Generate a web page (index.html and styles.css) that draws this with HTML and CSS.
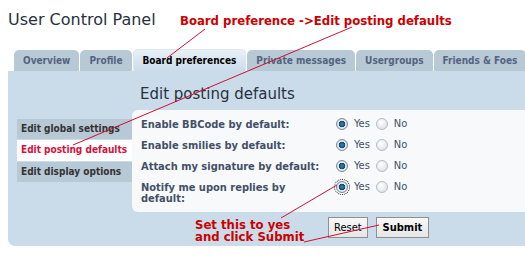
FILE: index.html
```html
<!DOCTYPE html>
<html>
<head>
<meta charset="utf-8">
<link rel="stylesheet" href="styles.css">
</head>
<body>
<div class="page">
  <h1 class="title">User Control Panel</h1>
  <ul class="tabs">
    <li class="tab">Overview</li>
    <li class="tab">Profile</li>
    <li class="tab active">Board preferences</li>
    <li class="tab">Private messages</li>
    <li class="tab">Usergroups</li>
    <li class="tab">Friends &amp; Foes</li>
  </ul>
  <div class="panel">
    <ul class="menu">
      <li class="menu-item">Edit global settings</li>
      <li class="menu-item current">Edit posting defaults</li>
      <li class="menu-item">Edit display options</li>
    </ul>
    <div class="main">
      <h2 class="heading">Edit posting defaults</h2>
      <div class="box">
        <div class="row">
          <div class="label">Enable BBCode by default:</div>
          <div class="opts"><input type="radio" name="a" checked><span class="opt">Yes</span><input type="radio" name="a"><span class="opt">No</span></div>
        </div>
        <div class="row">
          <div class="label">Enable smilies by default:</div>
          <div class="opts"><input type="radio" name="b" checked><span class="opt">Yes</span><input type="radio" name="b"><span class="opt">No</span></div>
        </div>
        <div class="row">
          <div class="label">Attach my signature by default:</div>
          <div class="opts"><input type="radio" name="c" checked><span class="opt">Yes</span><input type="radio" name="c"><span class="opt">No</span></div>
        </div>
        <div class="row">
          <div class="label">Notify me upon replies by default:</div>
          <div class="opts"><input type="radio" name="d" class="focused" checked><span class="opt">Yes</span><input type="radio" name="d"><span class="opt">No</span></div>
        </div>
      </div>
      <div class="buttons">
        <button class="btn">Reset</button>
        <button class="btn strong">Submit</button>
      </div>
    </div>
  </div>

  <div class="note note-top">Board preference -&gt;Edit posting defaults</div>
  <div class="note note-bottom">Set this to yes<br>and click Submit</div>
  <svg class="arrows" width="525" height="263" viewBox="0 0 525 263">
    <g stroke="#d0102e" stroke-width="1" fill="none">
      <line x1="205" y1="29" x2="167" y2="58"/>
      <line x1="352" y1="27" x2="73" y2="145"/>
      <line x1="337" y1="185" x2="281" y2="218"/>
      <line x1="379" y1="225" x2="304" y2="242"/>
    </g>
  </svg>
</div>
</body>
</html>
```
FILE: styles.css
```css
* { box-sizing: border-box; }
html, body { margin: 0; padding: 0; background: #fff; }
body { width: 525px; height: 263px; overflow: hidden; font-family: "DejaVu Sans Condensed", "DejaVu Sans", sans-serif; }
.page { position: relative; width: 525px; height: 263px; padding-top: 9px; overflow: hidden; }

.title {
  margin: 0 0 0 8px;
  font-family: "DejaVu Sans", sans-serif;
  font-weight: normal;
  font-size: 16px;
  line-height: 22px;
  color: #28313f;
  height: 22px;
}

.tabs {
  list-style: none;
  margin: 19px 0 0 14px;
  padding: 0;
  display: flex;
  gap: 1px;
  height: 21px;
  align-items: flex-end;
}
.tab {
  height: 21px;
  padding: 0 9px;
  background: #b8c9d6;
  border-radius: 5px 5px 0 0;
  font-size: 10px;
  font-weight: bold;
  line-height: 22px;
  color: #536482;
  white-space: nowrap;
}
.tab.active {
  height: 22px;
  background: linear-gradient(#e8f0f6, #cadcea);
  color: #000;
  border: 1px solid #dbe6ef;
  border-bottom: none;
  line-height: 21px;
}

.panel {
  margin-left: 8px;
  width: 530px;
  height: 175px;
  background: #cadcea;
  border-radius: 0 0 0 7px;
  display: flex;
  align-items: flex-start;
  padding-top: 12px;
}

.menu {
  list-style: none;
  margin: 36px 0 0 9px;
  padding: 0;
  width: 115px;
  flex: none;
}
.menu-item {
  height: 20px;
  margin-bottom: 1px;
  padding-left: 4px;
  background: #b8c9d6;
  font-size: 10px;
  font-weight: bold;
  line-height: 20px;
  color: #333;
  white-space: nowrap;
}
.menu-item.current { background: #fff; color: #d31141; height: 21px; }

.main { flex: 1; }
.heading {
  margin: 0 0 0 8px;
  font-family: "DejaVu Sans", sans-serif;
  font-size: 15px;
  font-weight: normal;
  line-height: 22px;
  height: 27px;
  color: #28313f;
}
.box {
  background: #f7f9fb;
  border-radius: 6px 0 0 6px;
  padding: 6px 0 6px 9px;
  height: 102px;
}
.row { display: flex; align-items: flex-start; min-height: 21px; }
.label {
  width: 195px;
  flex: none;
  padding: 3px 10px 0 0;
  font-size: 11px;
  font-weight: bold;
  line-height: 11px;
  color: #425067;
}
.opts { display: flex; align-items: center; padding-top: 1px; }
.opt { font-size: 11px; color: #425067; margin: 0 6px 0 6px; }

input[type=radio] {
  appearance: none;
  -webkit-appearance: none;
  width: 12px;
  height: 12px;
  margin: 0;
  border-radius: 50%;
  border: 1px solid #b4bcc3;
  background: radial-gradient(circle at 40% 35%, #ffffff, #dde2e6 80%);
}
input[type=radio]:checked {
  border-color: #7d8a95;
  background: radial-gradient(circle at 50% 50%, #3b8db8 0, #0f4a6a 3px, #e9eef2 3.6px, #cfd6dc 6px);
}
input[type=radio].focused { outline: 1px dotted #222; outline-offset: 1px; }

.buttons { display: flex; gap: 8px; padding: 5px 0 0 196px; }
.btn {
  height: 21px;
  padding: 0 5px;
  border: 1px solid #8f8f8f;
  background: linear-gradient(#f8f8f8, #e6e6e6);
  font-family: "DejaVu Sans Condensed", "DejaVu Sans", sans-serif;
  font-size: 11px;
  color: #000;
}
.btn.strong { font-weight: bold; padding: 0 6px; }

.note {
  position: absolute;
  color: #cc0000;
  font-weight: bold;
  font-family: "DejaVu Sans Condensed", "DejaVu Sans", sans-serif;
  font-size: 13px;
}
.note-top { left: 180px; top: 12px; line-height: 17px; }
.note-bottom { left: 195px; top: 219px; line-height: 12px; font-size: 13px; }

.arrows { position: absolute; left: 0; top: 0; pointer-events: none; }
```
